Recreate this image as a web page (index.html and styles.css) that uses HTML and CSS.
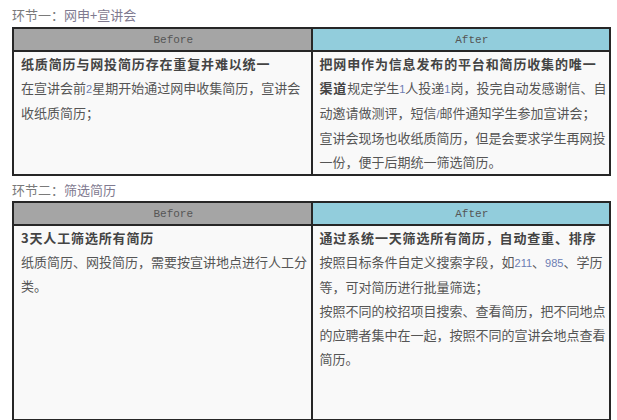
FILE: index.html
```html
<!DOCTYPE html>
<html lang="zh-CN">
<head>
<meta charset="utf-8">
<title>环节对比</title>
<link rel="stylesheet" href="styles.css">
</head>
<body>
<div class="page">
  <div class="title">环节一：<span class="tl">网申+宣讲会</span></div>
  <table class="cmp">
    <colgroup><col class="half"><col class="half"></colgroup>
    <thead>
      <tr><th class="before">Before</th><th class="after">After</th></tr>
    </thead>
    <tbody>
      <tr>
        <td>
          <div class="b">纸质简历与网投简历存在重复并难以统一</div>
          <div>在宣讲会前<span class="n">2</span>星期开始通过网申收集简历，宣讲会收纸质简历；</div>
        </td>
        <td>
          <div><span class="b">把网申作为信息发布的平台和简历收集的唯一渠道</span>规定学生<span class="n">1</span>人投递<span class="n">1</span>岗，投完自动发感谢信、自动邀请做测评，短信<span class="n">/</span>邮件通知学生参加宣讲会；</div>
          <div>宣讲会现场也收纸质简历，但是会要求学生再网投一份，便于后期统一筛选简历。</div>
        </td>
      </tr>
    </tbody>
  </table>
  <div class="title second">环节二：<span class="tl">筛选简历</span></div>
  <table class="cmp">
    <colgroup><col class="half"><col class="half"></colgroup>
    <thead>
      <tr><th class="before">Before</th><th class="after">After</th></tr>
    </thead>
    <tbody>
      <tr class="tall">
        <td>
          <div class="b">3天人工筛选所有简历</div>
          <div>纸质简历、网投简历，需要按宣讲地点进行人工分类。</div>
        </td>
        <td>
          <div class="b">通过系统一天筛选所有简历，自动查重、排序</div>
          <div>按照目标条件自定义搜索字段，如<span class="n">211</span>、<span class="n">985</span>、学历等，可对简历进行批量筛选；</div>
          <div>按照不同的校招项目搜索、查看简历，把不同地点的应聘者集中在一起，按照不同的宣讲会地点查看简历。</div>
        </td>
      </tr>
    </tbody>
  </table>
</div>
</body>
</html>
```
FILE: styles.css
```css
html, body {
  margin: 0;
  padding: 0;
  background: #ffffff;
}
body {
  font-family: "Noto Sans CJK SC", "Liberation Sans", sans-serif;
  font-size: 13px;
  color: #555;
}
.page {
  padding: 4px 6px 0 12px;
  width: 599px;
}
.title {
  line-height: 22px;
  height: 22px;
  color: #7a7a7a;
  margin-bottom: 1px;
}
.title .tl {
  color: #7f7a90;
}
.title.second {
  margin-top: 3px;
  margin-bottom: 0;
}
.cmp {
  width: 599px;
  border-collapse: collapse;
  table-layout: fixed;
  background: #f9f9f9;
}
.cmp col.half {
  width: 50%;
}
.cmp th, .cmp td {
  border: 2px solid #262626;
}
.cmp th {
  height: 21px;
  padding: 0 0 0 22px;
  font-family: "Liberation Mono", monospace;
  font-weight: normal;
  font-size: 11px;
  color: #555;
  text-align: center;
  vertical-align: middle;
}
.cmp th.before {
  background: #a5a5a5;
}
.cmp th.after {
  background: #92cddc;
}
.cmp td {
  vertical-align: top;
  padding: 0 1px 0 7px;
  line-height: 24px;
}
.cmp .tall td {
  height: 193px;
}
.b {
  font-weight: bold;
  color: #444;
  letter-spacing: 0.85px;
}
.n {
  font-family: "Liberation Sans", sans-serif;
  font-size: 11px;
  font-weight: normal;
  letter-spacing: 0;
  color: #6c7db3;
}
```
